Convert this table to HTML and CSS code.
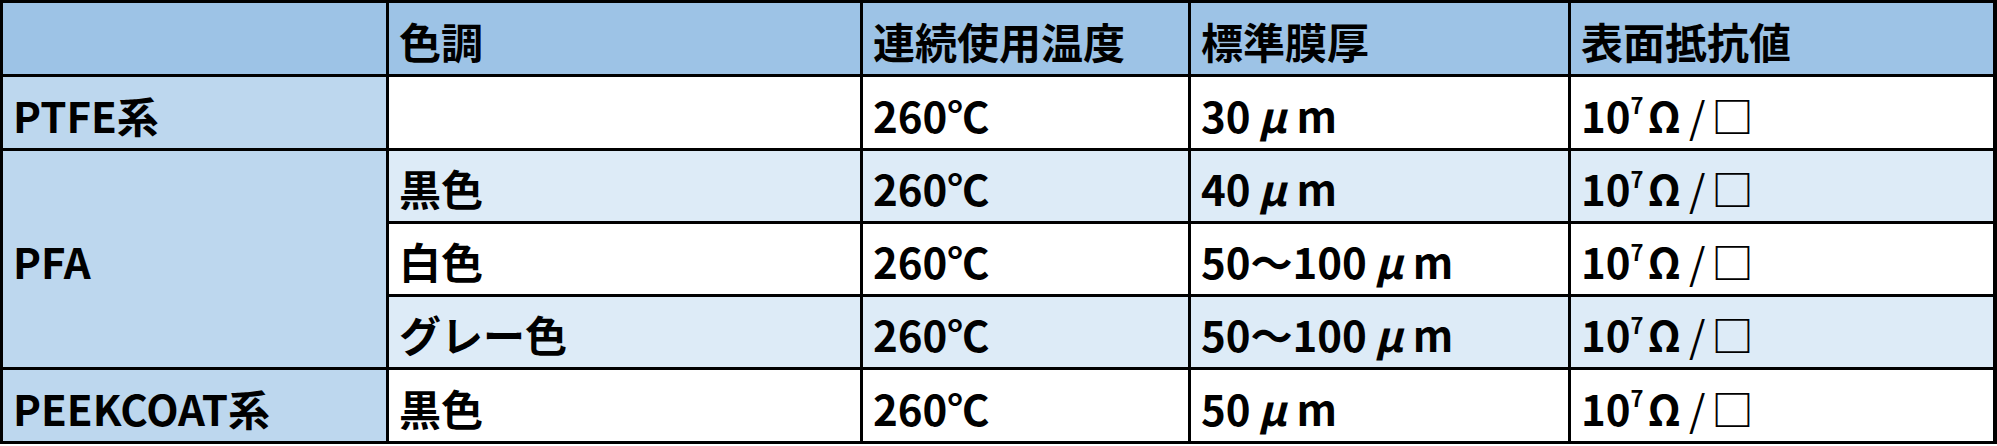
FILE: index.html
```html
<!DOCTYPE html>
<html lang="ja">
<head>
<meta charset="utf-8">
<link rel="stylesheet" href="styles.css">
</head>
<body>
<div class="sheet">
  <div class="cell hd"></div>
  <div class="cell hd">色調</div>
  <div class="cell hd">連続使用温度</div>
  <div class="cell hd">標準膜厚</div>
  <div class="cell hd">表面抵抗値</div>

  <div class="cell side">PTFE系</div>
  <div class="cell w"></div>
  <div class="cell w">260℃</div>
  <div class="cell w">30<span class="mu">μ</span>m</div>
  <div class="cell w">10<sup>7</sup>Ω<span class="sl">/</span>□</div>

  <div class="cell side span3">PFA</div>
  <div class="cell l">黒色</div>
  <div class="cell l">260℃</div>
  <div class="cell l">40<span class="mu">μ</span>m</div>
  <div class="cell l">10<sup>7</sup>Ω<span class="sl">/</span>□</div>

  <div class="cell w">白色</div>
  <div class="cell w">260℃</div>
  <div class="cell w">50～100<span class="mu">μ</span>m</div>
  <div class="cell w">10<sup>7</sup>Ω<span class="sl">/</span>□</div>

  <div class="cell l">グレー色</div>
  <div class="cell l">260℃</div>
  <div class="cell l">50～100<span class="mu">μ</span>m</div>
  <div class="cell l">10<sup>7</sup>Ω<span class="sl">/</span>□</div>

  <div class="cell side">PEEKCOAT系</div>
  <div class="cell w">黒色</div>
  <div class="cell w">260℃</div>
  <div class="cell w">50<span class="mu">μ</span>m</div>
  <div class="cell w">10<sup>7</sup>Ω<span class="sl">/</span>□</div>
</div>
</body>
</html>
```

FILE: styles.css
```css
html, body {
  margin: 0;
  padding: 0;
  background: #ffffff;
}

.sheet {
  display: grid;
  grid-template-columns: 383px 471px 325px 377px 422px;
  grid-template-rows: 71px 71px 70px 70px 70px 71px;
  gap: 3px;
  padding: 3px 4px 3px 3px;
  width: 1997px;
  box-sizing: border-box;
  background: #000000;
  font-family: "Noto Sans CJK JP", "Noto Sans", sans-serif;
  font-size: 42px;
  font-weight: 700;
  color: #000000;
}

.cell {
  display: flex;
  align-items: center;
  padding: 4px 0 0 10px;
  white-space: nowrap;
  line-height: 1;
}

.hd {
  background: #9dc3e6;
}

.side {
  background: #bdd7ee;
}

.span3 {
  grid-row: span 3;
}

.w {
  background: #ffffff;
}

.l {
  background: #ddebf7;
}

.mu {
  font-style: italic;
  margin: 0 10px 0 8px;
}

.sl {
  font-weight: 400;
  margin: 0 6px 0 8px;
}

sup {
  font-size: 22px;
  align-self: flex-start;
  margin-top: 12px;
  margin-right: 4px;
}
```
